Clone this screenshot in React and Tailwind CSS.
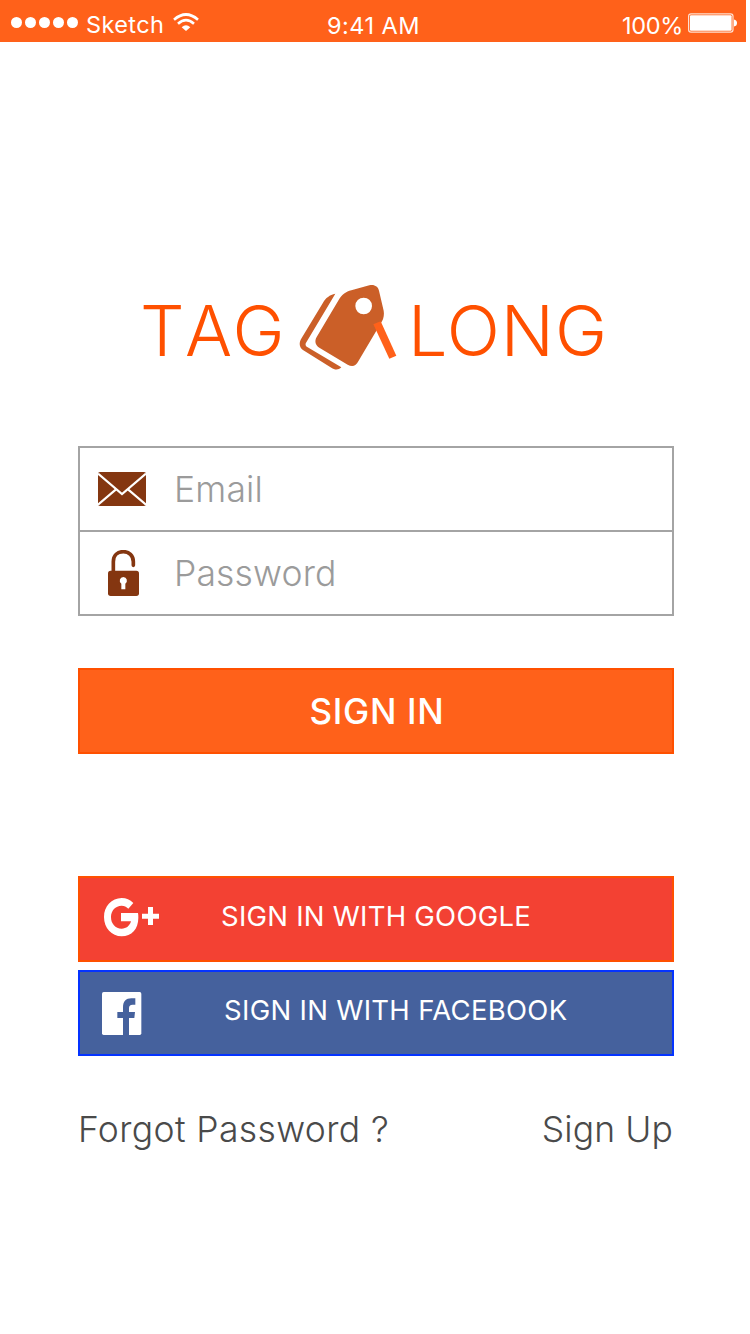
function WifiIcon() {
  return (
    <svg className="h-[18px] w-[26px]" viewBox="0 0 78 54" fill="none" stroke="#fff">
      <path d="M3 20 Q39 -11 75 20" strokeWidth="8" />
      <path d="M15 32 Q39 11 63 32" strokeWidth="8" />
      <path d="M26 43 Q39 31 52 43 L39 54 Z" fill="#fff" stroke="none" />
    </svg>
  );
}

function BatteryIcon() {
  return (
    <svg className="h-5 w-[50px]" viewBox="0 0 50 20" fill="none">
      <rect x="0.6" y="0.9" width="44.4" height="18.2" rx="2.4" stroke="#fff" strokeOpacity="0.8" strokeWidth="1.2" />
      <rect x="2" y="2.3" width="41.6" height="15.4" rx="1" fill="#fff" />
      <path d="M46 6.5 Q49 7 49 10 Q49 13 46 13.5 Z" fill="#fff" />
    </svg>
  );
}

function TagIcon() {
  return (
    <svg className="h-[86px] w-[100px] shrink-0" viewBox="24 42 300 258">
      <path
        fill="#cb5f28"
        d="M136 71 C119 74 107 84 99 98 L35 204 C26 218 27 232 40 241 L124 293 C134 300 145 301 154 292 L53 232 C46 227 45 223 49 217 Z"
      />
      <path
        fill="#cb5f28"
        fillRule="evenodd"
        d="M184 61 L238 46 C252 42 264 49 267 62 L281 122 C283 133 281 145 276 154 L205 274 C198 288 187 292 173 284 L88 233 C76 226 73 213 80 201 L146 90 C156 74 168 65 184 61 Z M221 83 A25 25 0 1 0 221 133 A25 25 0 1 0 221 83 Z"
      />
      <path fill="#ff611a" d="M250 163 L272 154 L319 257 L298 266 Z" />
    </svg>
  );
}

function MailIcon() {
  return (
    <svg className="h-[34px] w-12" viewBox="0 0 144 102">
      <rect width="144" height="102" rx="6" fill="#843610" />
      <path d="M0 5 L72 66 L144 5 M0 98 L54 52 M144 98 L90 52" fill="none" stroke="#fff" strokeWidth="6.5" />
    </svg>
  );
}

function LockIcon() {
  return (
    <svg className="h-[46px] w-[31px]" viewBox="0 0 93 138">
      <path d="M16 66 V35 C16 16 29 5 46 5 C63 5 76 17 76 35 V46" fill="none" stroke="#843610" strokeWidth="11" strokeLinecap="round" />
      <rect y="62" width="93" height="76" rx="8" fill="#843610" />
      <path d="M46 81 A11 11 0 0 0 40 101 V118 H52 V101 A11 11 0 0 0 46 81 Z" fill="#fff" />
    </svg>
  );
}

function GooglePlusIcon() {
  return (
    <svg className="h-[39px] w-[55px]" viewBox="102 84 165 117" fill="#fff">
      <path d="M204 129 H153 V154 H183 C179 168 169 176 155 176 C136 176 123 161 123 141 C123 122 136 107 155 107 C163 107 169 110 175 116 L190 99 C180 89 169 84 155 84 C125 84 102 109 102 141 C102 174 125 199 155 199 C185 199 205 177 205 143 C205 138 205 134 204 129 Z" />
      <path d="M234 111 H249 V131 H267 V146 H249 V165 H234 V146 H216 V131 H234 Z" />
    </svg>
  );
}

function FacebookIcon() {
  return (
    <svg className="h-[43px] w-10" viewBox="96 366 120 129">
      <rect x="96" y="366" width="118" height="129" rx="5" fill="#fff" />
      <path
        fill="#45619d"
        d="M159 495 V444 H142 V426 H159 V412 C159 394 168 385 184 385 H196 V404 H188 C180 404 177 408 177 415 V426 H195 L193 444 H177 V495 Z"
      />
    </svg>
  );
}

function StatusBar() {
  return (
    <header className="flex h-[42px] w-[746px] bg-[#ff611a] text-[23.5px] leading-[42px] text-white">
      <div className="flex w-[327px] pl-[11px]">
        <div className="flex gap-[3px] pt-[17px]">
          {[0, 1, 2, 3, 4].map((i) => (
            <span key={i} className="size-[11px] rounded-full bg-white" />
          ))}
        </div>
        <span className="ml-2 mt-1 w-[87px] whitespace-nowrap font-[370] tracking-[0.4px]">Sketch</span>
        <span className="pt-[13px]">
          <WifiIcon />
        </span>
      </div>
      <span className="mt-[5px] w-[295px] whitespace-nowrap font-[370] tracking-[0.45px]">9:41 AM</span>
      <span className="mt-[5px] w-[66px] whitespace-nowrap font-[370] tracking-[-0.3px]">100%</span>
      <span className="pt-[13px]">
        <BatteryIcon />
      </span>
    </header>
  );
}

function Field({ icon, label, type, className }) {
  return (
    <label className={`flex items-center ${className}`}>
      <span className="flex w-[94px] pl-[18px]">{icon}</span>
      <input
        type={type}
        placeholder={label}
        className="mt-[2px] min-w-0 flex-1 bg-transparent text-[35.5px] font-light leading-[44px] tracking-[0.15px] outline-none placeholder:text-[#9b9b9b]"
      />
    </label>
  );
}

export default function App() {
  return (
    <div className="h-[1334px] w-[750px] overflow-hidden bg-white font-['Inter',sans-serif]">
      <StatusBar />
      <main className="ml-[78px] flex w-[596px] flex-col pt-[242px]">
        <h1 className="flex h-[90px] pl-[62px] text-[70px] font-[320] leading-[94px] text-[#ff5000]">
          <span className="w-[158px] whitespace-nowrap tracking-[0.4px] [font-kerning:none]">TAG</span>
          <TagIcon />
          <span className="ml-[10px] whitespace-nowrap tracking-[1.1px]">LONG</span>
        </h1>

        <form className="mt-[72px] flex flex-col">
          <div className="border-2 border-[#a4a4a4]">
            <Field icon={<MailIcon />} label="Email" type="email" className="h-[82px]" />
            <Field
              icon={<span className="pl-[10px]"><LockIcon /></span>}
              label="Password"
              type="password"
              className="h-[84px] border-t-2 border-[#a4a4a4]"
            />
          </div>
          <button type="button" className="mt-[52px] h-[86px] border-2 border-[#ff5000] bg-[#ff611a] pl-[2px] text-[35px] font-medium tracking-[0.7px] text-white">
            SIGN IN
          </button>
        </form>

        <div className="mt-[122px] flex flex-col gap-2 text-[27.5px] font-[370] text-white">
          <button type="button" className="flex h-[86px] border-2 border-[#ff5000] bg-[#f34133] pl-6 pt-5 text-left">
            <GooglePlusIcon />
            <span className="ml-[62px] whitespace-nowrap leading-[36px] tracking-[0.24px]">SIGN IN WITH GOOGLE</span>
          </button>
          <button type="button" className="flex h-[86px] border-2 border-[#0433ff] bg-[#45619d] pl-[22px] pt-5 text-left">
            <FacebookIcon />
            <span className="ml-[82px] whitespace-nowrap leading-[36px] tracking-[0.3px]">SIGN IN WITH FACEBOOK</span>
          </button>
        </div>

        <nav className="mt-[52px] flex justify-between text-[35.5px] font-light leading-[44px] text-[#4a4a4a]">
          <a href="#forgot" className="whitespace-nowrap tracking-[0.37px]">Forgot Password ?</a>
          <a href="#signup" className="mr-[1px] whitespace-nowrap tracking-[0.1px]">Sign Up</a>
        </nav>
      </main>
    </div>
  );
}
